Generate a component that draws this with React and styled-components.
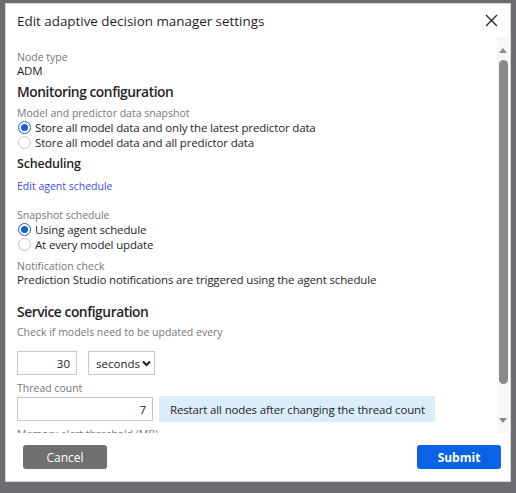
import React from 'react'
import styled, { createGlobalStyle } from 'styled-components'

const Global = createGlobalStyle`
  html, body {
    margin: 0;
    padding: 0;
    background: #6c6d70;
    font-family: "Open Sans", "Noto Sans", sans-serif;
  }
`

const Backdrop = styled.div`
  width: 516px;
  height: 493px;
  padding: 3px 5px 0 5px;
  box-sizing: border-box;
`

const Dialog = styled.div`
  width: 506px;
  height: 479px;
  box-sizing: border-box;
  background: #fff;
  border: 1px solid #d6d6d6;
  display: flex;
  flex-direction: column;
`

const Header = styled.div`
  height: 33px;
  flex: 0 0 33px;
  display: flex;
  align-items: center;
  justify-content: space-between;
  padding: 0 11px 0 11px;
`

const Title = styled.h1`
  margin: 0;
  font-size: 13.4px;
  font-weight: 400;
  color: #1f1f1f;
`

const CloseButton = styled.button`
  border: none;
  background: none;
  padding: 0;
  width: 16px;
  height: 16px;
  display: flex;
  align-items: center;
  justify-content: center;
  cursor: pointer;
`

const Body = styled.div`
  flex: 0 0 396px;
  display: flex;
  overflow: hidden;
`

const Content = styled.div`
  flex: 1;
  padding: 13px 0 0 11px;
  overflow: hidden;
`

const Scrollbar = styled.div`
  flex: 0 0 12px;
  margin-right: 1px;
  background: #f7f7f7;
  display: flex;
  flex-direction: column;
  align-items: center;
`

const ScrollArrow = styled.div`
  height: 17px;
  display: flex;
  align-items: center;
  justify-content: center;
  margin-top: ${p => p.$down ? 'auto' : '5px'};
  margin-bottom: ${p => p.$down ? '4px' : '0'};
`

const Thumb = styled.div`
  width: 9px;
  height: 324px;
  margin-top: 1px;
  border-radius: 5px;
  background: #8a8a8a;
`

const Label = styled.div`
  font-size: 10.5px;
  line-height: 14px;
  color: #777;
  margin-top: ${p => p.$mt || 0}px;
  white-space: nowrap;
`

const Value = styled.div`
  font-size: 11.5px;
  letter-spacing: -0.15px;
  line-height: 14px;
  color: #1f1f1f;
  white-space: nowrap;
`

const Heading = styled.h2`
  margin: ${p => p.$mt || 0}px 0 0 0;
  font-size: ${p => p.$small ? 12.5 : 13.8}px;
  letter-spacing: ${p => p.$small ? -0.2 : -0.45}px;
  font-weight: 600;
  line-height: 20px;
  color: #1f1f1f;
`

const Link = styled.a`
  display: block;
  margin-top: ${p => p.$mt || 0}px;
  font-size: 10.5px;
  line-height: 14px;
  color: #3c4df0;
  text-decoration: none;
`

const RadioRow = styled.label`
  display: flex;
  align-items: center;
  height: 15px;
  font-size: 11.5px;
  letter-spacing: -0.15px;
  color: #1f1f1f;
  white-space: nowrap;
`

const RadioDot = styled.span`
  width: 13px;
  height: 13px;
  box-sizing: border-box;
  border-radius: 50%;
  margin: 0 4px 0 1px;
  border: 1px solid ${p => p.$checked ? '#1a5fd0' : '#c4c4c4'};
  background: #fff;
  display: flex;
  align-items: center;
  justify-content: center;
  &::after {
    content: '';
    width: 7px;
    height: 7px;
    border-radius: 50%;
    background: ${p => p.$checked ? '#1a5fd0' : 'transparent'};
  }
`

const FieldRow = styled.div`
  display: flex;
  align-items: center;
  gap: ${p => p.$gap || 6}px;
  margin-top: ${p => p.$mt || 0}px;
`

const NumberBox = styled.div`
  width: ${p => p.$w}px;
  height: 24px;
  box-sizing: border-box;
  border: 1px solid #c8c8c8;
  font-size: 11.5px;
  color: #1f1f1f;
  display: flex;
  align-items: center;
  justify-content: flex-end;
  padding-right: 6px;
`

const SelectBox = styled.div`
  width: 67px;
  height: 24px;
  box-sizing: border-box;
  border: 1px solid #c8c8c8;
  font-size: 11.5px;
  color: #1f1f1f;
  display: flex;
  align-items: center;
  justify-content: flex-end;
  gap: 2px;
  padding-right: 3px;
`

const InfoBox = styled.div`
  height: 26px;
  box-sizing: border-box;
  padding: 0 10px 0 11px;
  background: #d9eefa;
  font-size: 11.5px;
  letter-spacing: -0.15px;
  color: #1f1f1f;
  display: flex;
  align-items: center;
  white-space: nowrap;
`

const Footer = styled.div`
  flex: 1;
  display: flex;
  align-items: flex-start;
  justify-content: space-between;
  padding: 12px 9px 0 17px;
`

const Button = styled.button`
  width: 84px;
  height: 24px;
  border: none;
  border-radius: 3px;
  font-family: "Open Sans", "Noto Sans", sans-serif;
  font-size: 12px;
  font-weight: ${p => p.$primary ? 700 : 400};
  color: #fff;
  background: ${p => p.$primary ? '#0a63e6' : '#707070'};
  cursor: pointer;
`

function Radio({ checked, children }) {
  return (
    <RadioRow>
      <RadioDot $checked={checked} />
      {children}
    </RadioRow>
  )
}

export default function App() {
  return (
    <>
      <Global />
      <Backdrop>
        <Dialog>
          <Header>
            <Title>Edit adaptive decision manager settings</Title>
            <CloseButton aria-label="Close">
              <svg width="13" height="13" viewBox="0 0 13 13">
                <path d="M1 1 L12 12 M12 1 L1 12" stroke="#1f2a3a" strokeWidth="1.4" />
              </svg>
            </CloseButton>
          </Header>
          <Body>
            <Content>
              <Label>Node type</Label>
              <Value>ADM</Value>
              <Heading $mt={4}>Monitoring configuration</Heading>
              <Label $mt={4}>Model and predictor data snapshot</Label>
              <Radio checked>Store all model data and only the latest predictor data</Radio>
              <Radio>Store all model data and all predictor data</Radio>
              <Heading $mt={4} $small>Scheduling</Heading>
              <Link href="#" $mt={5}>Edit agent schedule</Link>
              <Label $mt={15}>Snapshot schedule</Label>
              <Radio checked>Using agent schedule</Radio>
              <Radio>At every model update</Radio>
              <Label $mt={7}>Notification check</Label>
              <Value>Prediction Studio notifications are triggered using the agent schedule</Value>
              <Heading $mt={15}>Service configuration</Heading>
              <Label $mt={3}>Check if models need to be updated every</Label>
              <FieldRow $mt={12} $gap={11}>
                <NumberBox $w={60}>30</NumberBox>
                <SelectBox>
                  seconds
                  <svg width="9" height="7" viewBox="0 0 9 7">
                    <path d="M1 1.5 L4.5 5 L8 1.5" fill="none" stroke="#1f1f1f" strokeWidth="2" />
                  </svg>
                </SelectBox>
              </FieldRow>
              <Label $mt={6}>Thread count</Label>
              <FieldRow $mt={1} $gap={6}>
                <NumberBox $w={136}>7</NumberBox>
                <InfoBox>Restart all nodes after changing the thread count</InfoBox>
              </FieldRow>
              <Label $mt={5}>Memory alert threshold (MB)</Label>
            </Content>
            <Scrollbar>
              <ScrollArrow>
                <svg width="8" height="5" viewBox="0 0 8 5"><path d="M0 5 L4 0 L8 5 Z" fill="#8a8a8a" /></svg>
              </ScrollArrow>
              <Thumb />
              <ScrollArrow $down>
                <svg width="8" height="5" viewBox="0 0 8 5"><path d="M0 0 L4 5 L8 0 Z" fill="#8a8a8a" /></svg>
              </ScrollArrow>
            </Scrollbar>
          </Body>
          <Footer>
            <Button>Cancel</Button>
            <Button $primary>Submit</Button>
          </Footer>
        </Dialog>
      </Backdrop>
    </>
  )
}
